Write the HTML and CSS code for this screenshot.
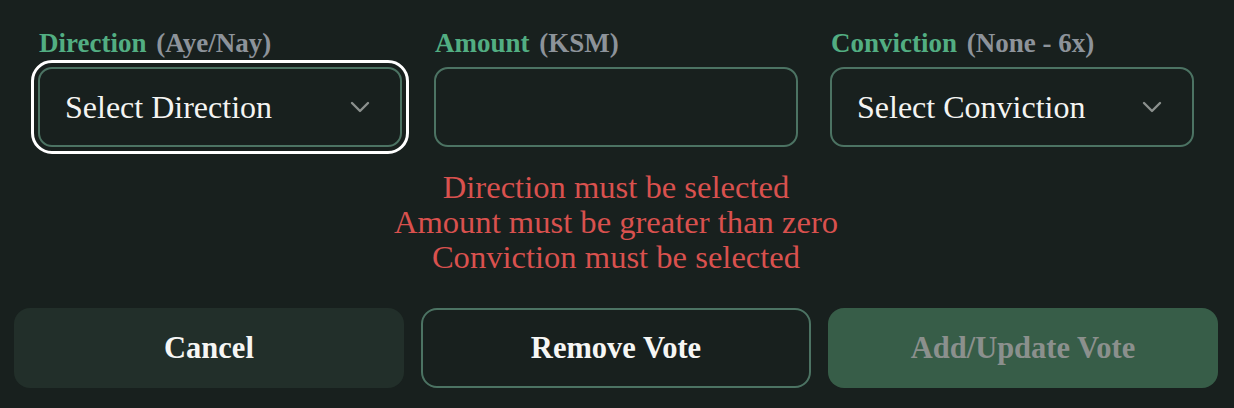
FILE: index.html
```html
<!DOCTYPE html>
<html lang="en">
<head>
<meta charset="utf-8">
<title>Vote</title>
<link rel="stylesheet" href="styles.css">
</head>
<body>
<div class="page">
  <div class="fields">
    <div class="field">
      <div class="label"><span class="label-main">Direction</span> <span class="label-hint">(Aye/Nay)</span></div>
      <div class="box select focused">
        <span class="select-text">Select Direction</span>
        <svg class="chev" width="20" height="12" viewBox="0 0 20 12"><polyline points="2,2 10,10 18,2" fill="none" stroke="#8b908d" stroke-width="2.4" stroke-linecap="round" stroke-linejoin="round"/></svg>
      </div>
    </div>
    <div class="field">
      <div class="label"><span class="label-main">Amount</span> <span class="label-hint">(KSM)</span></div>
      <div class="box input"></div>
    </div>
    <div class="field">
      <div class="label"><span class="label-main">Conviction</span> <span class="label-hint">(None - 6x)</span></div>
      <div class="box select">
        <span class="select-text">Select Conviction</span>
        <svg class="chev" width="20" height="12" viewBox="0 0 20 12"><polyline points="2,2 10,10 18,2" fill="none" stroke="#8b908d" stroke-width="2.4" stroke-linecap="round" stroke-linejoin="round"/></svg>
      </div>
    </div>
  </div>
  <div class="errors">
    <div>Direction must be selected</div>
    <div>Amount must be greater than zero</div>
    <div>Conviction must be selected</div>
  </div>
  <div class="buttons">
    <div class="btn btn-cancel">Cancel</div>
    <div class="btn btn-outline">Remove Vote</div>
    <div class="btn btn-primary">Add/Update Vote</div>
  </div>
</div>
</body>
</html>
```
FILE: styles.css
```css
html, body {
  margin: 0;
  padding: 0;
  background: #18201e;
}
body {
  font-family: "Liberation Serif", "Times New Roman", serif;
  color: #f2f2f0;
}
.page {
  padding: 28px 16px 0 14px;
}
.fields {
  display: grid;
  grid-template-columns: repeat(3, 1fr);
  gap: 32px;
  padding: 0 24px;
}
.field {
  display: flex;
  flex-direction: column;
  gap: 9px;
}
.label {
  font-size: 27px;
  line-height: 30px;
  font-weight: bold;
  padding-left: 1px;
}
.label-main {
  color: #52ae82;
}
.label-hint {
  color: #8d939a;
  margin-left: 3px;
}
.box {
  box-sizing: border-box;
  height: 80px;
  border: 2px solid #4c7363;
  border-radius: 14px;
  background: #18201e;
}
.select {
  display: flex;
  align-items: center;
  justify-content: space-between;
  padding: 0 30px 0 25px;
}
.select-text {
  font-size: 32px;
  color: #f4f4f2;
}
.chev {
  display: block;
}
.focused {
  outline: 3px solid #ffffff;
  outline-offset: 4px;
}
.errors {
  margin-top: 23px;
  text-align: center;
  color: #d9514e;
  font-size: 32.6px;
  line-height: 35px;
}
.buttons {
  margin-top: 33px;
  display: grid;
  grid-template-columns: repeat(3, 1fr);
  gap: 17px;
}
.btn {
  box-sizing: border-box;
  height: 80px;
  border-radius: 16px;
  display: flex;
  align-items: center;
  justify-content: center;
  font-size: 30.5px;
  font-weight: bold;
  color: #f6f6f4;
}
.btn-cancel {
  background: #222f2a;
}
.btn-outline {
  border: 2px solid #4c7363;
}
.btn-primary {
  background: #375d48;
  color: #8b908d;
}
```
